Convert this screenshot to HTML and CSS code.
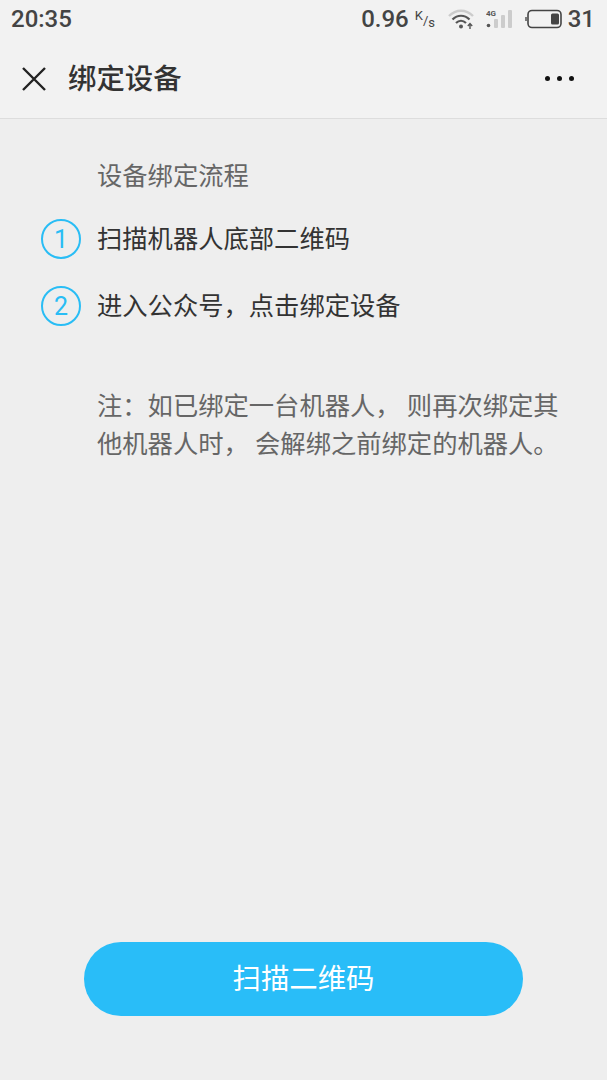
FILE: index.html
```html
<html>

<head>
    <title>绑定设备</title>
    <link rel="stylesheet" href="styles.css">
</head>

<body>
    <div class="phone">
        <div class="status">
            <span class="time">20:35</span>
            <div class="status-right">
                <span class="speed">0.96</span>
                <span class="unit"><sup>K</sup>/<sub>s</sub></span>
                <svg class="wifi" width="27" height="22" viewBox="0 0 27 22" fill="none">
                    <path d="M1 8 C8 1 18 1 25 8" stroke="#ccc" stroke-width="2.4"/>
                    <path d="M4.5 11.5 C9.5 6.5 16.5 6.5 21.5 11.5" stroke="#555" stroke-width="2.2"/>
                    <path d="M8 15 C11 12 15 12 18 15" stroke="#555" stroke-width="2.2"/>
                    <circle cx="13" cy="18.5" r="2" fill="#555"/>
                    <path d="M22 21V16M19.8 18l2.2-2.4 2.2 2.4" stroke="#555" stroke-width="1.4"/>
                </svg>
                <svg class="signal" width="27" height="22" viewBox="0 0 27 22">
                    <text x="0" y="7.5" class="g4">4G</text>
                    <circle cx="2.5" cy="17.5" r="1.8" fill="#555"/>
                    <rect x="8" y="11" width="4" height="9" rx="1" fill="#ccc"/>
                    <rect x="15" y="7" width="4" height="13" rx="1" fill="#ccc"/>
                    <rect x="22" y="2" width="4" height="18" rx="1" fill="#ccc"/>
                </svg>
                <svg class="battery" width="37" height="20" viewBox="0 0 37 20" fill="none">
                    <path d="M1 8v4" stroke="#555" stroke-width="1.5"/>
                    <rect x="3" y="1.5" width="33" height="17" rx="4" stroke="#444" stroke-width="1.6"/>
                    <rect x="26" y="4.5" width="8" height="11" rx="1.5" fill="#444"/>
                </svg>
                <span class="level">31</span>
            </div>
        </div>

        <div class="nav">
            <svg class="close" width="26" height="26" viewBox="0 0 26 26" fill="none">
                <path d="M2 2L24 24M24 2L2 24" stroke="#222" stroke-width="2.4"/>
            </svg>
            <span class="nav-title">绑定设备</span>
            <div class="more"><i></i><i></i><i></i></div>
        </div>

        <div class="content">
            <p class="flow-title">设备绑定流程</p>
            <div class="step step-first">
                <span class="num">1</span>
                <span class="step-text">扫描机器人底部二维码</span>
            </div>
            <div class="step">
                <span class="num">2</span>
                <span class="step-text">进入公众号，点击绑定设备</span>
            </div>
            <p class="note">注：如已绑定一台机器人， 则再次绑定其他机器人时， 会解绑之前绑定的机器人。</p>
        </div>

        <div class="bottom">
            <button class="scan-btn">扫描二维码</button>
        </div>
    </div>
</body>

</html>
```

FILE: styles.css
```css
* {
    box-sizing: border-box;
}

body {
    margin: 0;
    background-color: #eeeeee;
    font-family: "Roboto", "Noto Sans CJK SC", sans-serif;
}

.phone {
    display: flex;
    flex-direction: column;
    width: 607px;
    height: 1080px;
}

.status {
    display: flex;
    justify-content: space-between;
    align-items: center;
    height: 39px;
    padding: 0 12px 2px 11px;
    background-color: #f2f2f2;
    color: #444;
}

.time {
    font-size: 24px;
    font-weight: 500;
}

.status-right {
    display: flex;
    align-items: center;
}

.speed {
    font-size: 24px;
    font-weight: 500;
}

.unit {
    width: 21px;
    margin-left: 6px;
    margin-right: 12px;
    font-size: 13px;
    white-space: nowrap;
}

.unit sup {
    font-size: 13px;
    vertical-align: 5px;
}

.unit sub {
    font-size: 13px;
    vertical-align: -2px;
}

.wifi {
    margin-right: 11px;
}

.signal {
    margin-right: 12px;
}

.g4 {
    font-size: 8px;
    font-weight: 700;
    fill: #555;
}

.battery {
    margin-right: 6px;
}

.level {
    font-size: 24px;
    font-weight: 500;
}

.nav {
    display: flex;
    align-items: center;
    height: 80px;
    padding-left: 21px;
    padding-right: 33px;
    background-color: #f2f2f2;
    border-bottom: 1px solid #dddddd;
}

.nav-title {
    margin-left: 21px;
    padding-bottom: 4px;
    font-size: 28.4px;
    font-weight: 500;
    color: #333;
}

.more {
    display: flex;
    gap: 7px;
    margin-left: auto;
}

.more i {
    width: 5px;
    height: 5px;
    border-radius: 50%;
    background-color: #111;
}

.content {
    flex: 1;
    padding: 41px 38px 0 41px;
}

.flow-title {
    margin: 0 0 0 56px;
    font-size: 25.3px;
    line-height: 34px;
    color: #666;
}

.step {
    display: flex;
    align-items: center;
    height: 40px;
    margin-top: 27px;
}

.step-first {
    margin-top: 25px;
}

.num {
    display: flex;
    justify-content: center;
    align-items: center;
    width: 40px;
    height: 40px;
    border: 2px solid #29bdf5;
    border-radius: 50%;
    font-size: 25px;
    color: #29bdf5;
}

.step-text {
    margin-left: 16px;
    padding-bottom: 5px;
    font-size: 25.3px;
    color: #333;
}

.note {
    margin: 62px 0 0 56px;
    font-size: 25.3px;
    line-height: 38px;
    color: #666;
}

.bottom {
    display: flex;
    justify-content: center;
    padding-bottom: 64px;
}

.scan-btn {
    width: 439px;
    height: 74px;
    padding-bottom: 6px;
    border: none;
    border-radius: 37px;
    background-color: #29bdf8;
    color: #fff;
    font-family: inherit;
    font-size: 28.4px;
}
```
